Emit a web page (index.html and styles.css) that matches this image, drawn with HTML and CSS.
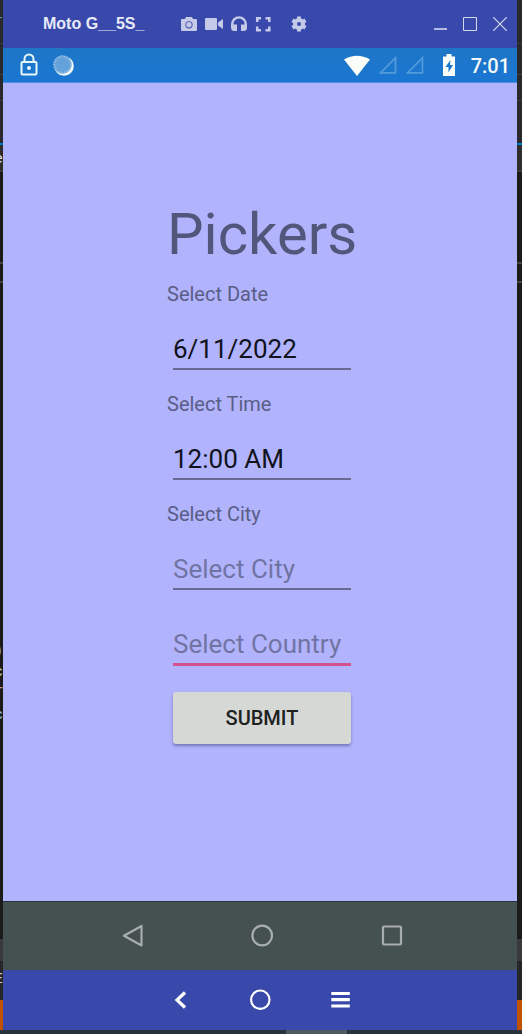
FILE: index.html
```html
<!DOCTYPE html>
<html lang="en">
<head>
<meta charset="utf-8">
<meta name="viewport" content="width=device-width, initial-scale=1">
<title>Moto G__5S_</title>
<link rel="stylesheet" href="styles.css">
</head>
<body>
<div class="desktop">
  <div class="editor-edge" aria-hidden="true">
    <span class="frag frag-tab">r</span>
    <span class="frag frag-file">e</span>
    <span class="frag frag-paren">)</span>
    <span class="frag frag-c1">c</span>
    <span class="frag frag-t">T</span>
    <span class="frag frag-c2">c</span>
    <span class="frag frag-err">E</span>
  </div>
  <div class="window">
    <header class="titlebar">
      <span class="device">Moto G__5S_</span>
      <div class="tools">
        <button class="icon-btn" aria-label="Screenshot"><svg width="16" height="16" viewBox="0 0 16 16"><path fill="#c5cae9" fill-rule="evenodd" d="M5 1h6l1 2h3a1 1 0 0 1 1 1v10a1 1 0 0 1-1 1H1a1 1 0 0 1-1-1V4a1 1 0 0 1 1-1h3zM8 5.200a3.600 3.600 0 1 0 0 7.200a3.600 3.600 0 1 0 0-7.200z"/><circle cx="8" cy="8.800" r="2.700" fill="#c5cae9"/></svg></button>
        <button class="icon-btn icon-video" aria-label="Record"><svg width="18" height="16" viewBox="0 0 18 16"><path fill="#c5cae9" d="M1 2h10q1 0 1 1v10q0 1-1 1H1q-1 0-1-1V3q0-1 1-1zM13 6.500L18 3v10l-5-3.500z"/></svg></button>
        <button class="icon-btn" aria-label="Audio"><svg width="16" height="16" viewBox="0 0 16 16"><path fill="none" stroke="#c5cae9" stroke-width="2.400" d="M1.200 12V8.200a6.800 6.800 0 0 1 13.600 0V12"/><path fill="#c5cae9" d="M0 8.500h6V15H3.500Q0 15 0 11.500zM10 8.500h6v3q0 3.500-3.500 3.500H10z"/></svg></button>
        <button class="icon-btn" aria-label="Full screen"><svg width="16" height="16" viewBox="0 0 16 16"><path fill="none" stroke="#c5cae9" stroke-width="2.500" d="M2.200 6V2.200H6M10.500 2.200h3.800V6M14.300 10.500v3.800h-3.800M6 14.300H2.200v-3.800"/></svg></button>
        <button class="icon-btn icon-gear" aria-label="Settings"><svg width="16" height="16" viewBox="0 0 16 16"><circle cx="8" cy="8" r="4" fill="none" stroke="#c5cae9" stroke-width="4"/><path stroke="#c5cae9" stroke-width="4" d="M8 .5v3.500M8 12v3.500M1.500 4.250l3 1.750M11.500 10l3 1.750M1.500 11.750l3-1.750M11.500 6l3-1.750"/></svg></button>
      </div>
      <div class="controls">
        <button class="icon-btn" aria-label="Minimize"><svg width="14" height="14" viewBox="0 0 14 14"><path fill="#b4bbe4" d="M1 11h13v2H1z"/></svg></button>
        <button class="icon-btn" aria-label="Maximize"><svg width="14" height="14" viewBox="0 0 14 14"><path fill="none" stroke="#d3d7f0" d="M.5.5h13v13H.5z"/></svg></button>
        <button class="icon-btn" aria-label="Close"><svg width="14" height="14" viewBox="0 0 14 14"><path fill="none" stroke="#d3d7f0" stroke-width="1.200" d="M0 0l14 14M14 0L0 14"/></svg></button>
      </div>
    </header>

    <div class="statusbar">
      <svg width="18" height="24" viewBox="0 0 18 24"><path fill="none" stroke="#e8f8fa" stroke-width="2" d="M4.500 9V6a4.500 4.500 0 0 1 9 0v3"/><rect x="1.500" y="9" width="15" height="12.500" rx="1" fill="none" stroke="#e8f8fa" stroke-width="2"/><circle cx="9" cy="15" r="2" fill="#e8f8fa"/></svg>
      <svg class="sync" width="21" height="21" viewBox="0 0 21 21"><circle cx="11" cy="11" r="9.800" fill="#f3f9f3"/><circle cx="9.500" cy="9.500" r="9.200" fill="#65a2da"/><circle cx="9.500" cy="9.500" r="8.200" fill="none" stroke="#9cc5e8" stroke-width="2" stroke-dasharray="1 1.500"/></svg>
      <div class="signals">
        <svg width="26" height="21" viewBox="0 0 26 21"><path fill="#fafdf8" d="M0 4.500Q13-3 26 4.500L13 21z"/></svg>
        <svg width="18" height="18" viewBox="0 0 18 18"><path fill="none" stroke="#529bdd" stroke-width="1.700" d="M1.500 16.800L16.500 1.800v15z"/></svg>
        <svg width="18" height="18" viewBox="0 0 18 18"><path fill="none" stroke="#529bdd" stroke-width="1.700" d="M1.500 16.800L16.500 1.800v15z"/></svg>
        <svg class="battery" width="12" height="22" viewBox="0 0 12 22"><path fill="#fafdf8" d="M3.500 0h5v2.500H12V22H0V2.500h3.500z"/><path fill="#1976cf" d="M7.500 6L2.500 13h3v5.500l4.500-7.500H7z"/></svg>
        <span class="clock">7:01</span>
      </div>
    </div>

    <main class="screen">
      <form class="form">
        <h1 class="title">Pickers</h1>
        <label class="label" for="date">Select Date</label>
        <input class="field" id="date" type="text" value="6/11/2022">
        <label class="label" for="time">Select Time</label>
        <input class="field" id="time" type="text" value="12:00 AM">
        <label class="label" for="city">Select City</label>
        <input class="field" id="city" type="text" placeholder="Select City">
        <input class="field field-active" type="text" placeholder="Select Country" aria-label="Select Country">
        <button class="submit" type="button">SUBMIT</button>
      </form>
    </main>

    <nav class="android-nav">
      <button class="icon-btn" aria-label="Back"><svg width="22" height="24" viewBox="0 0 22 24"><path fill="none" stroke="#a7aeac" stroke-width="2.200" stroke-linejoin="round" d="M20.500 2v19.500L3 11.700z"/></svg></button>
      <button class="icon-btn" aria-label="Home"><svg width="22" height="24" viewBox="0 0 22 24"><circle cx="11.200" cy="11.500" r="9.800" fill="none" stroke="#a7aeac" stroke-width="2.200"/></svg></button>
      <button class="icon-btn" aria-label="Recents"><svg width="22" height="24" viewBox="0 0 22 24"><rect x="2" y="2.500" width="18" height="18" rx="1" fill="none" stroke="#a7aeac" stroke-width="2.200"/></svg></button>
    </nav>

    <nav class="mirror-nav">
      <button class="icon-btn" aria-label="Go back"><svg width="22" height="22" viewBox="0 0 22 22"><path fill="none" stroke="#fff" stroke-width="3.200" d="M16 3.500L8 11l8 7.500"/></svg></button>
      <button class="icon-btn" aria-label="Go home"><svg width="22" height="22" viewBox="0 0 22 22"><circle cx="11.300" cy="10.700" r="9.200" fill="none" stroke="#fff" stroke-width="2.200"/></svg></button>
      <button class="icon-btn" aria-label="Menu"><svg width="22" height="22" viewBox="0 0 22 22"><path stroke="#fff" stroke-width="3.200" d="M2.300 4.500h18.500M2.300 10.700h18.500M2.300 17h18.500"/></svg></button>
    </nav>
  </div>
</div>
</body>
</html>
```
FILE: styles.css
```css
* {
  box-sizing: border-box;
}

body {
  margin: 0;
  font-family: Roboto, sans-serif;
}

.desktop {
  position: relative;
  display: flex;
  min-height: 100vh;
  padding: 0 5px 4px 3px;
  background:
    linear-gradient(#505a5e, #505a5e) 286px 100% / 61px 4px no-repeat,
    linear-gradient(#27343b, #27343b) 0 100% / 100% 4px no-repeat,
    linear-gradient(
      #29292b 0 43px, #3c3c3e 43px 44px, #29292b 44px 74px, #424244 74px 75px,
      #29292b 75px 100px, #3c3c3e 100px 101px, #29292b 101px 143px,
      #007acc 143px 145px, #2d2d2e 145px 170px, #3a3a3b 170px 172px,
      #1b1b1c 172px 262px, #444 262px 264px, #1b1b1c 264px 281px,
      #444 281px 283px, #1b1b1c 283px 939px, #3a3a3d 939px 961px,
      #262628 961px 1000px, #c25100 1000px);
}

.window {
  position: relative;
  display: flex;
  flex: 1;
  flex-direction: column;
  min-width: 0;
}

.icon-btn {
  display: flex;
  padding: 0;
  border: 0;
  background: none;
}

.titlebar {
  display: flex;
  align-items: center;
  height: 48px;
  padding: 0 10px 0 40px;
  background: #3949ab;
}

.device {
  width: 138px;
  color: #e8eaf6;
  font: bold 16px/24px "Liberation Sans", Arial, sans-serif;
}

.tools {
  display: flex;
  align-items: center;
  gap: 8px;
}

.icon-gear {
  margin-left: 12px;
}

.controls {
  display: flex;
  gap: 16px;
  margin-left: auto;
}

.statusbar {
  display: flex;
  align-items: center;
  height: 35px;
  padding: 0 7px 0 17px;
  border-bottom: 1px solid #4c8ede;
  background: linear-gradient(#1f76c6, #1976d2);
}

.sync {
  margin-left: 15px;
}

.signals {
  display: flex;
  align-items: center;
  gap: 9px;
  margin-left: auto;
}

.battery {
  margin: 0 7px 0 10px;
}

.clock {
  padding-top: 2px;
  color: #f5faf8;
  font-size: 20px;
  font-weight: 500;
  line-height: 24px;
}

.screen {
  display: flex;
  flex: 1;
  justify-content: center;
  align-items: flex-start;
  padding: 117px 0 0 4px;
  background: #b1b4fd;
}

.form {
  display: flex;
  flex-direction: column;
  width: 190px;
}

.title {
  margin: 0 0 14px;
  color: #52567a;
  font-size: 58px;
  font-weight: 400;
  line-height: 68px;
}

.label {
  color: #5a5d86;
  font-size: 20px;
  line-height: 24px;
}

.field {
  height: 64px;
  min-width: 0;
  margin: 0 6px 22px;
  padding: 24px 0 0;
  border: 0;
  border-bottom: 2px solid #686a93;
  outline: 0;
  background: transparent;
  color: #10121c;
  font: 400 26px/36px Roboto, sans-serif;
}

.field::placeholder {
  color: #7174a3;
  opacity: 1;
}

.field-active {
  height: 54px;
  margin-bottom: 26px;
  padding-top: 12px;
  border-bottom: 3px solid #d6528f;
}

.submit {
  height: 52px;
  margin: 0 6px;
  border: 0;
  border-radius: 3px;
  background: #d6d8d5;
  box-shadow: 0 2px 3px rgba(60, 60, 120, 0.5);
  color: #1d211f;
  font: 500 20px/24px Roboto, sans-serif;
}

.android-nav {
  display: flex;
  justify-content: center;
  align-items: center;
  gap: 108px;
  height: 69px;
  padding-left: 4px;
  border-top: 1px solid #28363f;
  background: #455150;
}

.mirror-nav {
  display: flex;
  justify-content: center;
  align-items: center;
  gap: 58px;
  height: 60px;
  background: #3949ab;
}

/* Text of the editor behind the window, cut off by the screen edge */
.editor-edge {
  position: absolute;
  inset: 0 auto 0 0;
  width: 3px;
  overflow: hidden;
  font: 14px/16px "Liberation Mono", monospace;
}

.frag {
  position: absolute;
  right: 0;
}

.frag-tab { top: 13px; color: #4fa3d8; }
.frag-file { top: 151px; color: #e6e6e6; }
.frag-paren { top: 643px; color: #9cc8f0; }
.frag-c1 { top: 664px; color: #dcdcaa; }
.frag-t { top: 685px; color: #ce9178; }
.frag-c2 { top: 707px; color: #9cdcfe; }
.frag-err { top: 971px; color: #cccccc; }
```
